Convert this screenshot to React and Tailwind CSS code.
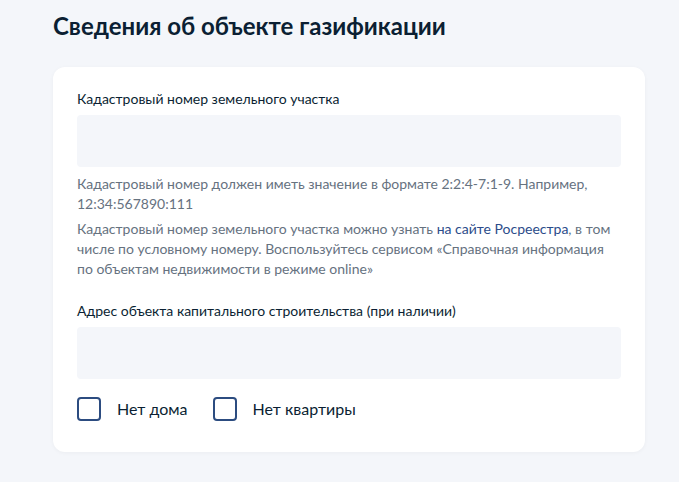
import React from 'react';

const Checkbox = ({ label }) => (
  <label className="flex items-center gap-4 cursor-pointer">
    <span className="w-6 h-6 rounded-[4px] border-2 border-[#2c4c80] bg-white" />
    <span className="text-[16px] text-[#0b1f33]">{label}</span>
  </label>
);

export default function App() {
  return (
    <div className="min-h-[482px] bg-[#f4f6fa] px-[53px] pt-[11px] pb-[29px]" style={{ fontFamily: 'Lato, "Noto Sans", sans-serif' }}>
      <h1 className="text-[24px] leading-[30px] font-bold text-[#0b1f33]">Сведения об объекте газификации</h1>

      <div className="mt-[26px] w-[592px] bg-white rounded-[12px] shadow-[0_1px_4px_rgba(0,0,0,0.04)] px-6 pt-[22px] pb-[31px]">
        <div className="text-[14px] leading-[20px] text-[#0b1f33]">Кадастровый номер земельного участка</div>
        <div className="mt-[6px] h-[52px] rounded-[4px] bg-[#f4f6fa]" />
        <div className="mt-[7px] text-[14px] leading-[20px] text-[#66727f]">
          Кадастровый номер должен иметь значение в формате 2:2:4-7:1-9. Например, 12:34:567890:111
        </div>
        <div className="mt-[5px] text-[14px] leading-[20px] text-[#66727f]">
          Кадастровый номер земельного участка можно узнать <a className="text-[#2c4c8a]">на сайте Росреестра</a>, в том числе по условному номеру. Воспользуйтесь сервисом «Справочная информация по объектам недвижимости в режиме online»
        </div>

        <div className="mt-[22px] text-[14px] leading-[20px] text-[#0b1f33]">Адрес объекта капитального строительства (при наличии)</div>
        <div className="mt-[6px] h-[52px] rounded-[4px] bg-[#f4f6fa]" />

        <div className="mt-[18px] flex items-center gap-[25px]">
          <Checkbox label="Нет дома" />
          <Checkbox label="Нет квартиры" />
        </div>
      </div>
    </div>
  );
}
